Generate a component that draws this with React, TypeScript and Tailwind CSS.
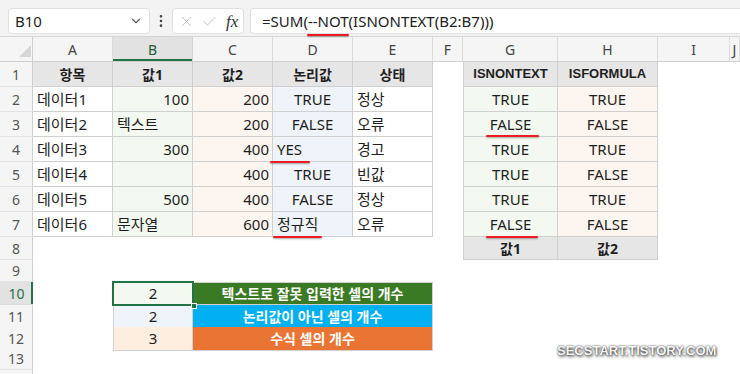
import { X, Check, ChevronDown, EllipsisVertical } from "lucide-react";

type Cell = { t?: string; c?: string; span3?: boolean; line?: string; sel?: boolean };

const GRID = "grid grid-cols-[33px_80px_80px_80px_80px_80px_30px_95px_100px_72px_1fr]";
const BD = "border-r border-b border-[#d0d0d0]";
const HD = "bg-[#e7e6e6] font-bold justify-center text-[14px] border-r border-b border-[#d0d0d0]";
const HE = "bg-[#e7e6e6] font-bold justify-center text-[13px] font-['Liberation_Sans',sans-serif] border-r border-b border-[#d0d0d0]";
const W = `${BD} bg-white`;
const GR = `${BD} bg-[#f3f9f0]`;
const OR = `${BD} bg-[#fdf5ef]`;
const BL = `${BD} bg-[#eef4f9]`;
const L = "justify-start pl-[4px]";
const R = "justify-end pr-[3px]";
const M = "justify-center";

const e: Cell = {};

const data: [string, string, string, string, string, string, string][] = [
  ["데이터1", "100", "200", "TRUE", "정상", "TRUE", "TRUE"],
  ["데이터2", "텍스트", "200", "FALSE", "오류", "FALSE", "FALSE"],
  ["데이터3", "300", "400", "YES", "경고", "TRUE", "TRUE"],
  ["데이터4", "", "400", "TRUE", "빈값", "TRUE", "FALSE"],
  ["데이터5", "500", "400", "FALSE", "정상", "TRUE", "TRUE"],
  ["데이터6", "문자열", "600", "정규직", "오류", "FALSE", "FALSE"],
];

const isNum = (s: string) => /^\d+$/.test(s);
const isBool = (s: string) => s === "TRUE" || s === "FALSE";

// keyed by excel row - column index
const lines: Record<string, string> = {
  "4-3": "left-[-3px] bottom-[-2px] w-[40px]",
  "7-3": "left-0 bottom-[-2px] w-[49px]",
  "3-6": "left-[22px] bottom-[-1px] w-[53px]",
  "7-6": "left-[22px] bottom-[-2px] w-[52px]",
};

const rows: Cell[][] = [
  [
    { t: "항목", c: HD },
    { t: "값1", c: HD },
    { t: "값2", c: HD },
    { t: "논리값", c: HD },
    { t: "상태", c: HD },
    e,
    { t: "ISNONTEXT", c: `${HE} border-l` },
    { t: "ISFORMULA", c: HE },
    e,
    e,
  ],
  ...data.map((d, i) => {
    const row = i + 2;
    const al = (s: string) => (isNum(s) ? R : isBool(s) ? M : L);
    return [
      { t: d[0], c: `${W} ${L}` },
      { t: d[1], c: `${GR} ${al(d[1])}` },
      { t: d[2], c: `${OR} ${al(d[2])}` },
      { t: d[3], c: `${BL} ${al(d[3])}`, line: lines[`${row}-3`] },
      { t: d[4], c: `${W} ${L}` },
      e,
      { t: d[5], c: `${GR} border-l ${M}`, line: lines[`${row}-6`] },
      { t: d[6], c: `${OR} ${M}` },
      e,
      e,
    ] as Cell[];
  }),
  [e, e, e, e, e, e, { t: "값1", c: `${HD} border-l` }, { t: "값2", c: HD }, e, e],
  [e, e, e, e, e, e, e, e, e, e],
  [
    e,
    { t: "2", c: `bg-[#f3f9f0] ${M}`, sel: true },
    { t: "텍스트로 잘못 입력한 셀의 개수", c: `${BD} border-t bg-[#3a7a24] text-white font-bold text-[14px] ${M}`, span3: true },
    e,
    e,
    e,
    e,
  ],
  [
    e,
    { t: "2", c: `${BD} border-l bg-[#eef4f9] ${M}` },
    { t: "논리값이 아닌 셀의 개수", c: `${BD} bg-[#00b0f0] text-white font-bold text-[14px] ${M}`, span3: true },
    e,
    e,
    e,
    e,
  ],
  [
    e,
    { t: "3", c: `${BD} border-l bg-[#fdeee0] ${M}` },
    { t: "수식 셀의 개수", c: `${BD} bg-[#ea7434] text-white font-bold text-[14px] ${M}`, span3: true },
    e,
    e,
    e,
    e,
  ],
  [e, e, e, e, e, e, e, e, e, e],
  [e, e, e, e, e, e, e, e, e, e],
];

const heights = [
  "h-[25px]", "h-[25px]", "h-[25px]", "h-[25px]", "h-[25px]", "h-[25px]", "h-[25px]",
  "h-[23px]", "h-[22px]", "h-[23px]", "h-[22px]", "h-[21px]", "h-[22px]", "h-[22px]",
];

const cols = ["A", "B", "C", "D", "E", "F", "G", "H", "I", "J"];

function Underline({ pos }: { pos: string }) {
  return <span className={`absolute z-10 h-[2px] rounded-full bg-[#ec1c24] shadow-[0_1px_2px_rgba(0,0,0,0.35)] ${pos}`} />;
}

export default function App() {
  return (
    <div className="relative w-[740px] h-[374px] overflow-hidden bg-white text-[#1e1e1e] font-['Noto_Sans','Noto_Sans_CJK_KR',sans-serif]">
      {/* Formula bar */}
      <div className="flex items-start h-[37px] bg-[#f3f3f3] pt-[8px] pl-[8px] border-b border-[#d6d6d6]">
        <div className="w-[142px] h-[26px] bg-white border border-[#e0e0e0] rounded-[4px] flex items-center pl-[6px] pr-[6px] text-[15px]">
          <span className="flex-1">B10</span>
          <ChevronDown size={14} className="text-[#555]" />
        </div>
        <div className="w-[22px] h-[26px] flex items-center justify-center">
          <EllipsisVertical size={16} className="text-[#444]" />
        </div>
        <div className="w-[72px] h-[26px] bg-white border border-[#e0e0e0] rounded-[4px] flex items-center pl-[5px] gap-[6px]">
          <X size={17} strokeWidth={1.1} className="text-[#b4b4b4]" />
          <Check size={17} strokeWidth={1.1} className="text-[#b4b4b4]" />
          <span className="font-['Liberation_Serif',serif] italic text-[17px] text-[#333] leading-none ml-[2px]">fx</span>
        </div>
        <div className="flex-1 h-[26px] ml-[6px] bg-white border-y border-l border-[#e0e0e0] rounded-l-[4px] flex items-center pl-[11px] text-[15px] text-[#222]">
          =SUM(
          <span className="relative">
            --NOT
            <Underline pos="left-[-1px] bottom-[-4px] w-[42px]" />
          </span>
          (ISNONTEXT(B2:B7)))
        </div>
      </div>

      {/* Column headers */}
      <div className={`${GRID} h-[25px] bg-[#f5f5f5] border-b border-[#cfcfcf] text-[14px] text-[#444]`}>
        <div className="relative border-r border-[#cfcfcf]">
          <svg width="12" height="12" className="absolute left-[19px] top-[8px]">
            <polygon points="12,0 12,12 0,12" fill="#d6d6d6" />
          </svg>
        </div>
        {cols.map((c) => (
          <div
            key={c}
            className={
              c === "B"
                ? "flex items-center justify-center bg-[#e2e2e2] border-r border-[#d6d6d6] shadow-[inset_0_-2px_0_#217346] text-[#1f5c38]"
                : "flex items-center justify-center border-r border-[#dcdcdc]"
            }
          >
            {c}
          </div>
        ))}
      </div>

      {/* Rows */}
      {rows.map((row, ri) => (
        <div key={ri} className={`${GRID} ${heights[ri]} text-[15px]`}>
          <div
            className={
              ri === 9
                ? "flex items-center justify-center bg-[#e2e2e2] border-b border-[#dcdcdc] shadow-[inset_-2px_0_0_#217346] text-[14px] text-[#1f7245]"
                : "flex items-center justify-center bg-[#f5f5f5] border-r border-r-[#cfcfcf] border-b border-[#e2e2e2] text-[14px] text-[#555]"
            }
          >
            {ri < 13 ? ri + 1 : ""}
          </div>
          {row.map((cell, ci) => (
            <div
              key={ci}
              className={`relative flex items-center whitespace-nowrap ${cell.sel ? "z-10 shadow-[0_0_0_1px_#217346,inset_0_0_0_1px_#217346]" : ""} ${cell.span3 ? "col-span-3" : ""} ${cell.c ?? ""}`}
            >
              {cell.t}
              {cell.line && <Underline pos={cell.line} />}
              {cell.sel && <span className="absolute right-[-4px] bottom-[-4px] w-[6px] h-[6px] bg-[#217346] border border-white" />}
            </div>
          ))}
        </div>
      ))}

      {/* Watermark */}
      <div className="absolute left-[557px] top-[341px] font-['Liberation_Sans',sans-serif] font-bold text-[13px] text-[#f5f5f5] [text-shadow:0_0_2px_rgba(0,0,0,0.9),1px_2px_3px_rgba(0,0,0,0.6)]">
        SECSTART.TISTORY.COM
      </div>
    </div>
  );
}
